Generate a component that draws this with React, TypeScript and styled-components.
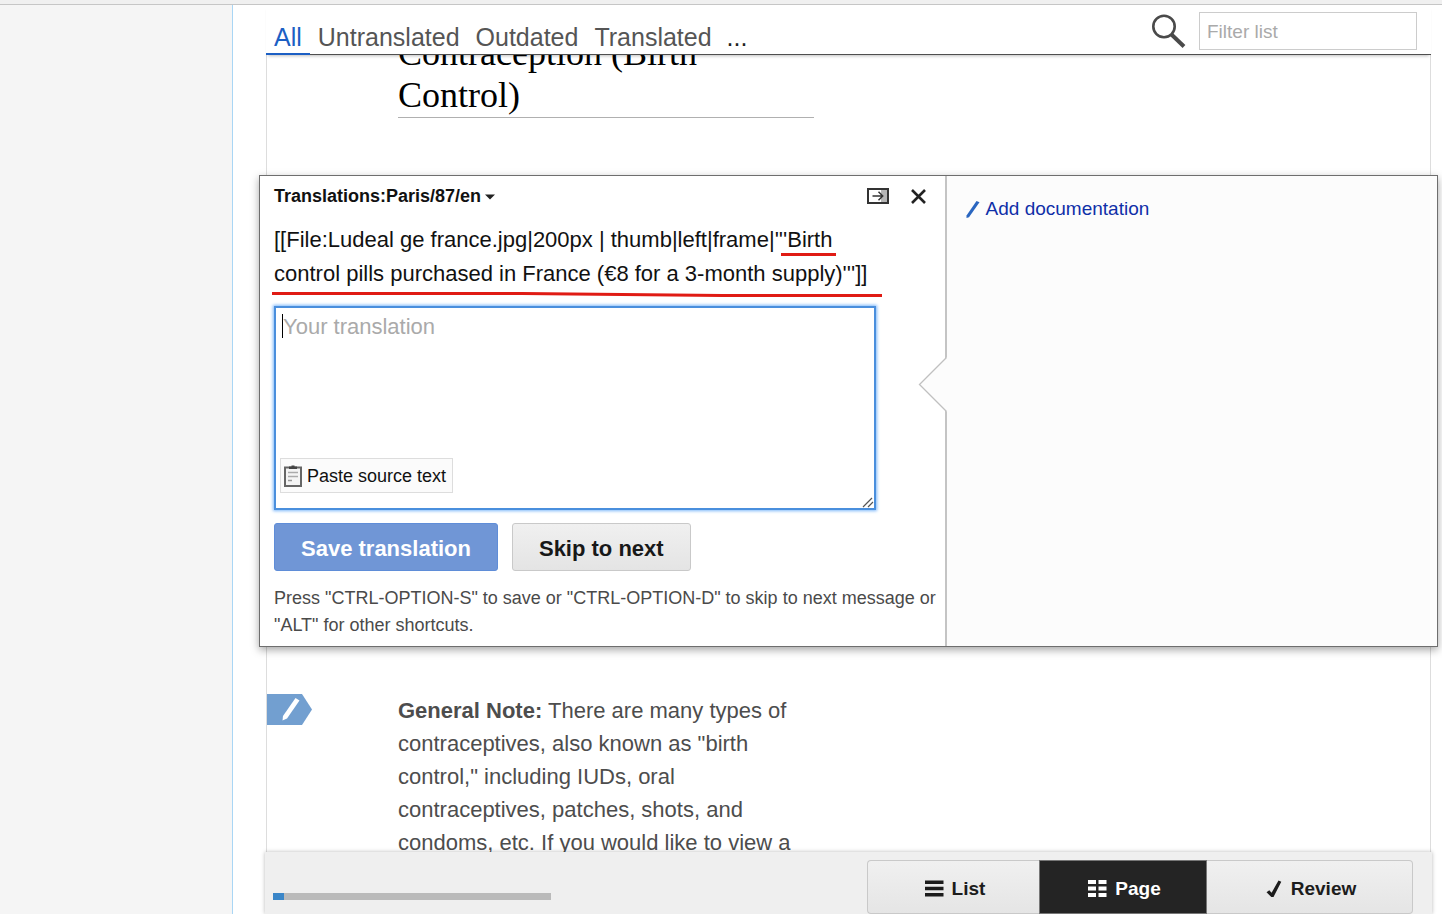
import React from "react";
import styled, { createGlobalStyle, css } from "styled-components";

const GlobalStyle = createGlobalStyle`
  * { box-sizing: border-box; }
  body {
    margin: 0;
    background: #fff;
    color: #111;
    font-family: "Liberation Sans", Arial, sans-serif;
  }
  button, input, textarea { font-family: inherit; margin: 0; }
`;

const Page = styled.div`
  display: flex;
  flex-direction: column;
  height: 100vh;
`;

const TopStrip = styled.div`
  flex: none;
  height: 5px;
  background: #f0f0f0;
  border-bottom: 1px solid #c6c6c6;
`;

const Columns = styled.div`
  flex: 1;
  min-height: 0;
  display: flex;
`;

const Sidebar = styled.aside`
  flex: none;
  width: 233px;
  background: #f5f5f5;
  border-right: 1px solid #a9d6f5;
`;

const Main = styled.main`
  flex: 1;
  min-width: 0;
  display: flex;
  flex-direction: column;
  overflow: hidden;
`;

const FilterBar = styled.header`
  position: relative;
  z-index: 2;
  flex: none;
  display: flex;
  justify-content: space-between;
  height: 50px;
  margin: 0 11px 0 33px;
  background: #fff;
  box-shadow: inset 0 -1px 0 #4f4f4f, 0 3px 3px -2px rgba(0, 0, 0, 0.25);
`;

const Tabs = styled.nav`
  display: flex;
  align-items: flex-end;
`;

const Tab = styled.button<{ $active?: boolean; $more?: boolean }>`
  height: 36px;
  padding: ${(p) => (p.$more ? "2px 7px 0" : "2px 8px 0")};
  border: 0;
  border-bottom: 2px solid ${(p) => (p.$active ? "#1c5fc4" : "transparent")};
  background: none;
  color: ${(p) => (p.$active ? "#1c5fc4" : p.$more ? "#222" : "#555")};
  font-size: 25px;
  line-height: 32px;
`;

const SearchBox = styled.label`
  display: flex;
  align-items: flex-start;
  gap: 13px;
  padding: 7px 14px 0 0;
`;

const SearchIcon = styled.svg`
  margin-top: 1px;
`;

const SearchInput = styled.input`
  width: 218px;
  height: 38px;
  padding: 2px 7px 0;
  border: 1px solid #ccc;
  background: #fff;
  font-size: 19px;
  &::placeholder { color: #aaa; opacity: 1; }
`;

const ScrollArea = styled.div`
  flex: 1;
  min-height: 0;
  padding: 0 11px 0 33px;
  overflow: hidden;
`;

const Article = styled.div`
  border: 1px solid #ddd;
  border-width: 0 1px;
`;

const MessageRow = styled.section<{ $scrolled?: boolean }>`
  display: grid;
  grid-template-columns: 131px 416px;
  ${(p) =>
    p.$scrolled
      ? css`
          margin-top: -23px;
          padding-bottom: 57px;
        `
      : css`
          padding-top: 47px;
        `}
`;

const Heading = styled.h1`
  grid-column: 2;
  margin: 0;
  padding-bottom: 1px;
  border-bottom: 1px solid #b0b0b0;
  color: #000;
  font-family: "Liberation Serif", serif;
  font-size: 36px;
  font-weight: 400;
  line-height: 42px;
`;

const NoteText = styled.p`
  margin: 0;
  color: #4d4d4d;
  font-size: 22px;
  line-height: 33px;
`;

const Editor = styled.section`
  position: relative;
  z-index: 1;
  display: grid;
  grid-template-columns: 7fr 5fr;
  margin: 0 -8px;
  border: 1px solid #6e6e6e;
  background: #fff;
  box-shadow: 0 3px 8px rgba(0, 0, 0, 0.35);
`;

const EditPane = styled.div`
  min-width: 0;
  padding: 0 4px 7px 14px;
  border-right: 2px solid #c4c4c4;
`;

const EditHeader = styled.div`
  display: flex;
  align-items: center;
  justify-content: space-between;
  height: 40px;
`;

const TitleButton = styled.button`
  display: flex;
  align-items: center;
  gap: 4px;
  padding: 0;
  border: 0;
  background: none;
  color: #111;
  font-size: 18px;
  font-weight: 700;
`;

const HeaderTools = styled.div`
  display: flex;
  align-items: center;
  gap: 20px;
  padding-right: 14px;
`;

const IconButton = styled.button`
  display: flex;
  padding: 0;
  border: 0;
  background: none;
`;

const SourceText = styled.div`
  position: relative;
  padding-top: 7px;
  margin-right: 63px;
  color: #111;
  font-size: 22px;
  line-height: 34px;
`;

const Marker = styled.svg`
  position: absolute;
  left: -2px;
  top: 30px;
  overflow: visible;
`;

const InputWrap = styled.div`
  position: relative;
  height: 204px;
  margin: 15px 65px 13px 0;
`;

const TranslationBox = styled.textarea`
  display: block;
  width: 100%;
  height: 100%;
  padding: 4px 7px;
  border: 2px solid #4a8fdd;
  outline: 0;
  box-shadow: 0 0 3px 1px #7db8fa;
  resize: none;
  font-size: 22px;
  line-height: 30px;
  &::placeholder { color: #aaa; opacity: 1; }
`;

const Caret = styled.span`
  position: absolute;
  left: 8px;
  top: 8px;
  width: 1px;
  height: 24px;
  background: #000;
`;

const Grip = styled.svg`
  position: absolute;
  right: 2px;
  bottom: 2px;
`;

const PasteButton = styled.button`
  position: absolute;
  left: 6px;
  bottom: 17px;
  display: flex;
  align-items: center;
  gap: 5px;
  height: 35px;
  padding: 1px 6px 0 3px;
  border: 1px solid #ddd;
  background: #fbfbfb;
  color: #111;
  font-size: 18px;
`;

const Actions = styled.div`
  display: flex;
  gap: 14px;
`;

const ActionButton = styled.button<{ $primary?: boolean }>`
  height: 48px;
  padding: 3px 26px 0;
  border: 1px solid ${(p) => (p.$primary ? "#5f8dd8" : "#c9c9c9")};
  border-radius: 3px;
  background: ${(p) => (p.$primary ? "#7096d6" : "linear-gradient(#f0f0f0, #e4e4e4)")};
  color: ${(p) => (p.$primary ? "#fff" : "#181818")};
  font-size: 22px;
  font-weight: 700;
`;

const Hint = styled.p`
  margin: 14px 0 0;
  color: #4a4a4a;
  font-size: 18px;
  line-height: 27px;
`;

const DocPane = styled.aside`
  position: relative;
  padding: 18px 19px;
  background: #fcfcfc;
`;

const Pointer = styled.svg`
  position: absolute;
  left: -29px;
  top: 180px;
`;

const DocLink = styled.a`
  display: inline-flex;
  align-items: center;
  gap: 6px;
  color: #0f2fa8;
  font-size: 19px;
  line-height: 30px;
  text-decoration: none;
`;

const BottomBar = styled.footer`
  position: relative;
  z-index: 2;
  flex: none;
  display: flex;
  justify-content: space-between;
  height: 62px;
  margin: 0 10px 0 32px;
  padding: 8px 19px 0 8px;
  background: #efefef;
  box-shadow: 0 0 4px rgba(0, 0, 0, 0.28);
`;

const Progress = styled.div`
  width: 278px;
  height: 7px;
  margin-top: 33px;
  background: #bababa;
`;

const ProgressDone = styled.div`
  width: 4%;
  height: 100%;
  background: #3a86c8;
`;

const ViewSwitch = styled.div`
  display: grid;
  grid-template-columns: 172fr 168fr 206fr;
  width: 546px;
  height: 54px;
`;

const ViewButton = styled.button<{ $active?: boolean }>`
  display: flex;
  align-items: center;
  justify-content: center;
  gap: 8px;
  padding: 3px 0 0 3px;
  border: 1px solid ${(p) => (p.$active ? "#777" : "#c9c9c9")};
  background: ${(p) => (p.$active ? "#242424" : "linear-gradient(#f0f0f0, #e5e5e5)")};
  color: ${(p) => (p.$active ? "#fff" : "#1c1c1c")};
  font-size: 19px;
  font-weight: 700;
  &:first-child { border-right: 0; border-radius: 4px 0 0 4px; }
  &:last-child { border-left: 0; border-radius: 0 4px 4px 0; }
`;

export default function App() {
  return (
    <Page>
      <GlobalStyle />
      <TopStrip />
      <Columns>
        <Sidebar />
        <Main>
          <FilterBar>
            <Tabs>
              <Tab $active>All</Tab>
              <Tab>Untranslated</Tab>
              <Tab>Outdated</Tab>
              <Tab>Translated</Tab>
              <Tab $more>...</Tab>
            </Tabs>
            <SearchBox>
              <SearchIcon width="34" height="36" viewBox="0 0 34 36" fill="none" stroke="#4a4a4a" aria-hidden="true">
                <circle cx="12" cy="13.5" r="10.7" strokeWidth="2.6" />
                <path d="M19.5 21.5 L32 33.5" strokeWidth="4" />
              </SearchIcon>
              <SearchInput type="search" placeholder="Filter list" aria-label="Filter list" />
            </SearchBox>
          </FilterBar>

          <ScrollArea>
            <Article>
              <MessageRow $scrolled>
                <Heading>Contraception (Birth Control)</Heading>
              </MessageRow>

              <Editor>
                <EditPane>
                  <EditHeader>
                    <TitleButton aria-haspopup="menu">
                      Translations:Paris/87/en
                      <svg width="11" height="8" viewBox="0 0 11 8" aria-hidden="true">
                        <path d="M0 2.5 H10 L5 7.5 Z" fill="#222" />
                      </svg>
                    </TitleButton>
                    <HeaderTools>
                      <IconButton aria-label="Expand editor">
                        <svg width="24" height="18" viewBox="0 0 24 18" fill="none">
                          <rect x="15" y="2" width="6" height="14" fill="#b5b5b5" />
                          <rect x="2" y="2" width="20" height="14" stroke="#333" strokeWidth="2" />
                          <path d="M6.500 9 H17 M12.500 4.800 L16.700 9 L12.500 13.200" stroke="#333" strokeWidth="1.5" />
                        </svg>
                      </IconButton>
                      <IconButton aria-label="Close">
                        <svg width="17" height="17" viewBox="0 0 17 17">
                          <path d="M2 2 L15 15 M15 2 L2 15" stroke="#222" strokeWidth="2.6" />
                        </svg>
                      </IconButton>
                    </HeaderTools>
                  </EditHeader>

                  <SourceText>
                    [[File:Ludeal ge france.jpg|200px | thumb|left|frame|'''Birth control pills purchased in France (€8
                    for a 3-month supply)''']]
                    <Marker width="612" height="50" viewBox="0 0 612 50" stroke="#e01b14" strokeWidth="3" fill="none" aria-hidden="true">
                      <path d="M509 8.500 H564" />
                      <path d="M0 47.500 L250 47.500 L450 49.500 H610" />
                    </Marker>
                  </SourceText>

                  <InputWrap>
                    <TranslationBox placeholder="Your translation" aria-label="Your translation" />
                    <Caret />
                    <Grip width="12" height="12" viewBox="0 0 12 12" stroke="#555" strokeWidth="1.2" aria-hidden="true">
                      <path d="M1 11 L10 2 M6 11 L11 6" />
                    </Grip>
                    <PasteButton>
                      <svg width="18" height="22" viewBox="0 0 18 22" fill="none" aria-hidden="true">
                        <rect x="1" y="2.500" width="16" height="18.500" stroke="#666" strokeWidth="2" fill="#f4f4f4" />
                        <path d="M5 4 V1.500 H7.500 V0.500 H10.500 V1.500 H13 V4 Z" fill="#444" />
                        <path d="M4 7.500 H14 M4 11.500 H14" stroke="#aaa" strokeWidth="1.500" />
                        <path d="M4 15.500 H8" stroke="#999" strokeWidth="1.500" />
                      </svg>
                      Paste source text
                    </PasteButton>
                  </InputWrap>

                  <Actions>
                    <ActionButton $primary>Save translation</ActionButton>
                    <ActionButton>Skip to next</ActionButton>
                  </Actions>
                  <Hint>
                    Press "CTRL-OPTION-S" to save or "CTRL-OPTION-D" to skip to next message or "ALT" for other
                    shortcuts.
                  </Hint>
                </EditPane>

                <DocPane>
                  <Pointer width="30" height="56" viewBox="0 0 30 56" aria-hidden="true">
                    <path d="M30 0 L28.500 1.500 L1.500 28.500 L28.500 55.500 L30 56 Z" fill="#fcfcfc" />
                    <path d="M28.500 1.500 L1.500 28.500 L28.500 55.500" fill="none" stroke="#c0c0c0" strokeWidth="1.300" />
                  </Pointer>
                  <DocLink href="#documentation">
                    <svg width="14" height="19" viewBox="0 0 14 19" aria-hidden="true">
                      <path d="M0.500 18 L0.500 15.500 L10.500 1 L13.500 2.200 L3 17.300 Z" fill="#2a66c0" />
                    </svg>
                    Add documentation
                  </DocLink>
                </DocPane>
              </Editor>

              <MessageRow>
                <svg width="46" height="31" viewBox="0 0 46 31" aria-hidden="true">
                  <path d="M0 0 H35 L45 15.500 L35 31 H0 Z" fill="#729fd0" />
                  <path d="M15.500 26.500 L16 22 L28.500 4 L32.500 6.500 L20 24.500 Z" fill="#fff" />
                </svg>
                <NoteText>
                  <b>General Note:</b> There are many types of contraceptives, also known as "birth control," including
                  IUDs, oral contraceptives, patches, shots, and condoms, etc. If you would like to view a
                </NoteText>
              </MessageRow>
            </Article>
          </ScrollArea>

          <BottomBar>
            <Progress role="progressbar" aria-label="Translated messages" aria-valuenow={4}>
              <ProgressDone />
            </Progress>
            <ViewSwitch>
              <ViewButton>
                <svg width="19" height="17" viewBox="0 0 19 17" fill="#1c1c1c" aria-hidden="true">
                  <path d="M0 0.500 H18.500 V4 H0 Z M0 6.700 H18.500 V10.200 H0 Z M0 13 H18.500 V16.500 H0 Z" />
                </svg>
                List
              </ViewButton>
              <ViewButton $active>
                <svg width="19" height="17" viewBox="0 0 19 17" fill="#fff" aria-hidden="true">
                  <path d="M0 0 H8 V4 H0 Z M10.500 0 H18.500 V4 H10.500 Z M0 6.500 H8 V10.500 H0 Z M10.500 6.500 H18.500 V10.500 H10.500 Z M0 13 H8 V17 H0 Z M10.500 13 H18.500 V17 H10.500 Z" />
                </svg>
                Page
              </ViewButton>
              <ViewButton>
                <svg width="17" height="18" viewBox="0 0 17 18" aria-hidden="true">
                  <path d="M0.500 12.300 L3.300 10.300 L5.600 12.800 L12.500 0.500 L15.300 1.800 L7.500 17 H5.300 Z" fill="#1c1c1c" />
                </svg>
                Review
              </ViewButton>
            </ViewSwitch>
          </BottomBar>
        </Main>
      </Columns>
    </Page>
  );
}
